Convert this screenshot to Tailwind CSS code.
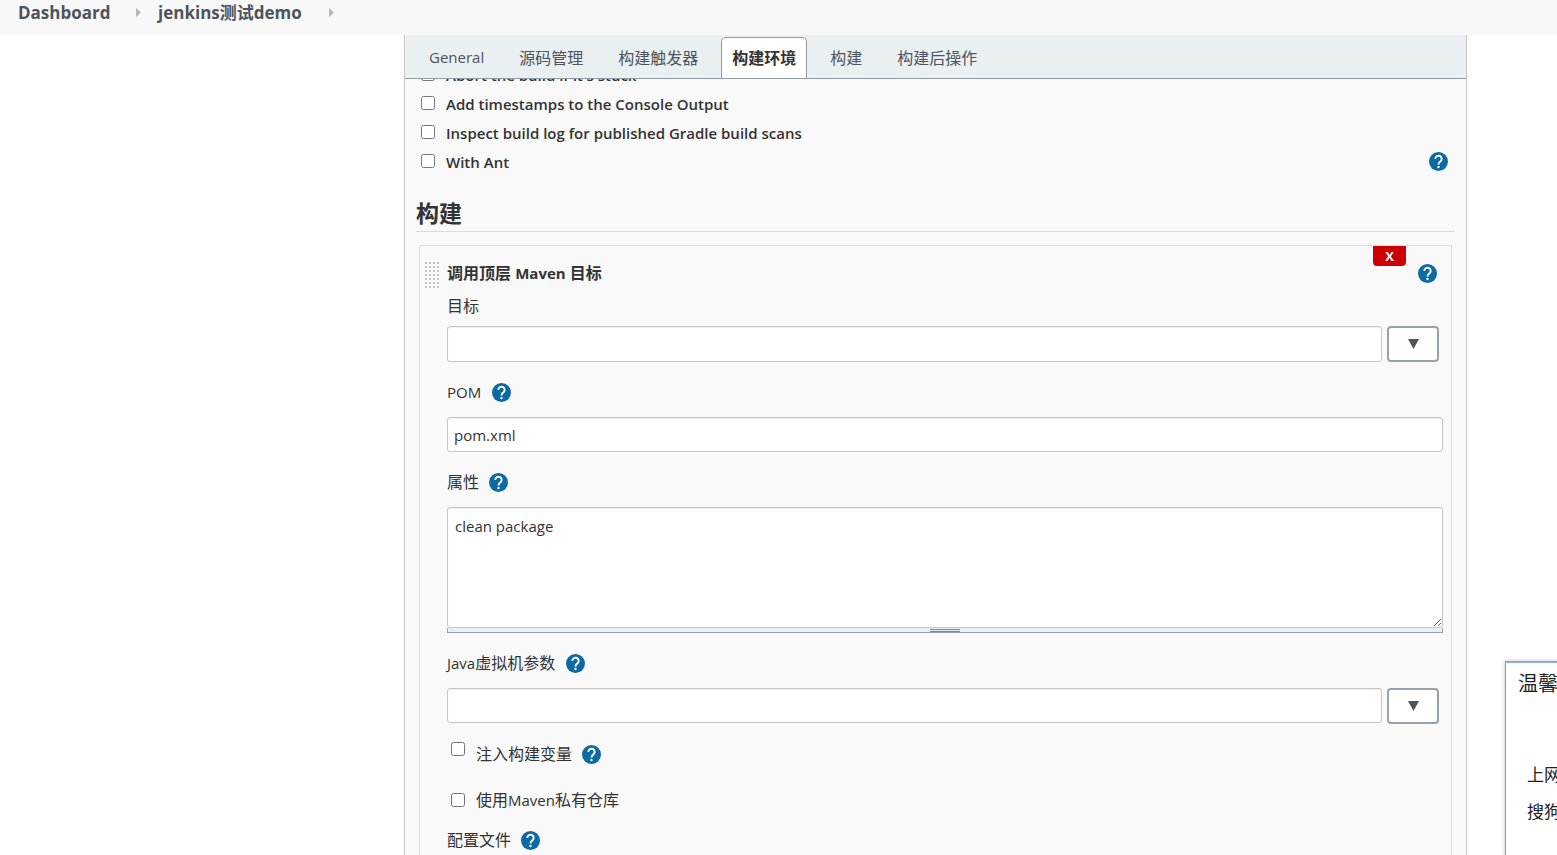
<!DOCTYPE html>
<html lang="zh-CN">
<head>
<meta charset="utf-8">
<title>jenkins测试demo</title>
<script src="https://cdn.jsdelivr.net/npm/@tailwindcss/browser@4"></script>
</head>
<body class="relative flex h-screen flex-col overflow-hidden bg-white font-['Open_Sans','Noto_Sans_CJK_SC',sans-serif] text-[15px] leading-[22px] text-[#333]">
<svg class="hidden">
  <symbol id="help" viewBox="0 0 24 24">
    <circle cx="12" cy="12" r="12" fill="#0b6aa2"/>
    <path d="M8 8.700a4 4 0 1 1 6.700 2.900C13.200 12.900 12 13.500 12 15.800" fill="none" stroke="#fff" stroke-width="2.500"/>
    <circle cx="12" cy="19" r="1.500" fill="#fff"/>
  </symbol>
</svg>

<nav class="flex h-[35px] shrink-0 items-start bg-[#f8f8f8] pl-[18px] text-[17px] leading-[26px] font-bold text-[#4d545d]">
  <a href="#" class="w-[118px]">Dashboard</a>
  <svg class="mt-2 mr-[17px] h-[9px] w-[5px]" viewBox="0 0 5 9"><path d="M0 0l5 4.500L0 9z" fill="#b5b8bb"/></svg>
  <a href="#" class="w-[171px]">jenkins测试demo</a>
  <svg class="mt-2 h-[9px] w-[5px]" viewBox="0 0 5 9"><path d="M0 0l5 4.500L0 9z" fill="#b5b8bb"/></svg>
</nav>

<div class="flex min-h-0 flex-1">
  <aside class="w-[404px] shrink-0"></aside>
  <main class="mr-[90px] flex min-w-0 flex-1 flex-col border-x border-[#c4c8cc] bg-[#f9f9f9]">
    <div role="tablist" class="flex h-11 shrink-0 items-end gap-[11px] border-b border-[#8f9ca6] bg-[#eaeff2] pl-3 text-base text-[#4d545d]">
      <button role="tab" class="h-[41px] px-3 text-[15px]">General</button>
      <button role="tab" class="h-[41px] px-3">源码管理</button>
      <button role="tab" class="h-[41px] px-3">构建触发器</button>
      <button role="tab" aria-selected="true" class="h-[41px] rounded-t-[5px] border border-b-0 border-[#8f9ca6] bg-white px-[10px] font-bold text-[#333]">构建环境</button>
      <button role="tab" class="h-[41px] px-3">构建</button>
      <button role="tab" class="h-[41px] px-3">构建后操作</button>
    </div>

    <form class="min-h-0 flex-1 overflow-hidden px-[11px]">
      <div class="-mt-[19px] pr-[7px] pl-[5px] font-semibold">
        <label class="flex h-[29px] items-center gap-[11px]"><input type="checkbox" class="mb-px size-[14px]">Abort the build if it's stuck</label>
        <label class="flex h-[29px] items-center gap-[11px]"><input type="checkbox" class="mb-px size-[14px]">Add timestamps to the Console Output</label>
        <label class="flex h-[29px] items-center gap-[11px]"><input type="checkbox" class="mb-px size-[14px]">Inspect build log for published Gradle build scans</label>
        <div class="flex h-[29px] items-center justify-between">
          <label class="flex items-center gap-[11px]"><input type="checkbox" class="mb-px size-[14px]">With Ant</label>
          <button type="button" aria-label="帮助"><svg class="size-[19px]"><use href="#help"/></svg></button>
        </div>
      </div>

      <h2 class="mt-[21px] border-b border-[#dcdcdc] pb-[2px] text-[23px] leading-8 font-bold">构建</h2>

      <section class="relative mx-[3px] mt-[13px] h-[700px] border border-[#dedede] pr-2 pl-[5px]">
        <button type="button" class="absolute top-0 right-[45px] h-5 w-[33px] rounded-b-[4px] bg-[#c00] text-[13px] leading-5 font-bold text-white">X</button>
        <div class="flex h-[43px] items-center pt-4 pb-[5px]">
          <svg class="-mb-[5px] h-[27px] w-[22px] shrink-0" viewBox="0 0 22 27">
            <defs><pattern id="grip" width="4" height="4" patternUnits="userSpaceOnUse"><rect width="2" height="2" fill="#c2c2c2"/></pattern></defs>
            <rect width="14" height="27" fill="url(#grip)"/>
          </svg>
          <h3 class="flex-1 text-base leading-[22px] font-bold">调用顶层 <span class="text-[15px]">Maven</span> 目标</h3>
          <button type="button" aria-label="帮助" class="mr-[6px]"><svg class="size-[19px]"><use href="#help"/></svg></button>
        </div>
        <div class="pl-[22px]">
          <label for="targets" class="mt-[6px] block text-base leading-[22px]">目标</label>
          <div class="mt-[9px] flex gap-[5px] pr-1">
            <input id="targets" type="text" class="h-9 min-w-0 flex-1 rounded-[3px] border border-[#c6c6c6] bg-white px-[6px] shadow-[inset_0_1px_1px_#0001]">
            <button type="button" aria-label="展开" class="flex h-9 w-[52px] items-center justify-center rounded-[4px] border-2 border-[#98a2ac] bg-white"><svg class="h-[10px] w-[11px]" viewBox="0 0 11 10"><path d="M0 0h11L5.500 10z" fill="#4d545d"/></svg></button>
          </div>

          <div class="mt-[19px] flex h-[22px] items-center gap-[11px]">
            <label for="pom" class="font-medium">POM</label>
            <button type="button" aria-label="帮助"><svg class="size-[19px]"><use href="#help"/></svg></button>
          </div>
          <input id="pom" type="text" value="pom.xml" class="mt-[14px] block h-[35px] w-full rounded-[3px] border border-[#c6c6c6] bg-white px-[6px] shadow-[inset_0_1px_1px_#0001]">

          <div class="mt-[19px] flex h-[22px] items-center gap-[10px] text-base">
            <label for="props">属性</label>
            <button type="button" aria-label="帮助"><svg class="size-[19px]"><use href="#help"/></svg></button>
          </div>
          <textarea id="props" class="mt-[14px] block h-[121px] w-full resize rounded-[3px] border border-[#c6c6c6] bg-white px-[7px] py-[7px] shadow-[inset_0_1px_1px_#0001]">clean package</textarea>
          <div class="flex h-[5px] justify-center border border-t-0 border-[#98a2ac] bg-[#eaeff2]"><div class="mt-px h-[3px] w-[30px] border-y border-[#7d8a83]"></div></div>

          <div class="mt-[19px] flex h-[22px] items-center gap-[11px]">
            <label for="jvm" class="text-base"><span class="text-[15px] font-medium">Java</span>虚拟机参数</label>
            <button type="button" aria-label="帮助"><svg class="size-[19px]"><use href="#help"/></svg></button>
          </div>
          <div class="mt-[14px] flex gap-[5px] pr-1">
            <input id="jvm" type="text" class="h-[35px] min-w-0 flex-1 rounded-[3px] border border-[#c6c6c6] bg-white px-[6px] shadow-[inset_0_1px_1px_#0001]">
            <button type="button" aria-label="展开" class="flex h-9 w-[52px] items-center justify-center rounded-[4px] border-2 border-[#98a2ac] bg-white"><svg class="h-[10px] w-[11px]" viewBox="0 0 11 10"><path d="M0 0h11L5.500 10z" fill="#4d545d"/></svg></button>
          </div>

          <div class="mt-[19px] flex h-[22px] items-center gap-[10px] pl-1 text-base">
            <label class="flex items-center gap-[11px]"><input type="checkbox" class="mb-[10px] size-[14px]">注入构建变量</label>
            <button type="button" aria-label="帮助"><svg class="size-[19px]"><use href="#help"/></svg></button>
          </div>
          <label class="mt-6 flex h-[22px] items-center gap-[11px] pl-1 text-base"><input type="checkbox" class="size-[14px]"><span>使用<span class="text-[15px] font-medium">Maven</span>私有仓库</span></label>
          <div class="mt-[18px] flex h-[22px] items-center gap-[10px] text-base">
            <span>配置文件</span>
            <button type="button" aria-label="帮助"><svg class="size-[19px]"><use href="#help"/></svg></button>
          </div>
        </div>
      </section>
    </form>
  </main>
</div>

<div role="dialog" class="absolute right-0 bottom-0 h-[194px] w-[52px] overflow-hidden border-t-2 border-l border-t-[#86aed8] border-l-[#999] bg-white whitespace-nowrap text-[#222] shadow-[0_0_4px_#0004]">
  <p class="mt-[10px] pl-3 text-[20px] leading-[22px]">温馨</p>
  <p class="mt-[69px] pl-[21px] text-[17px]">上网</p>
  <p class="mt-[15px] pl-[21px] text-[17px]">搜狗</p>
</div>
</body>
</html>
